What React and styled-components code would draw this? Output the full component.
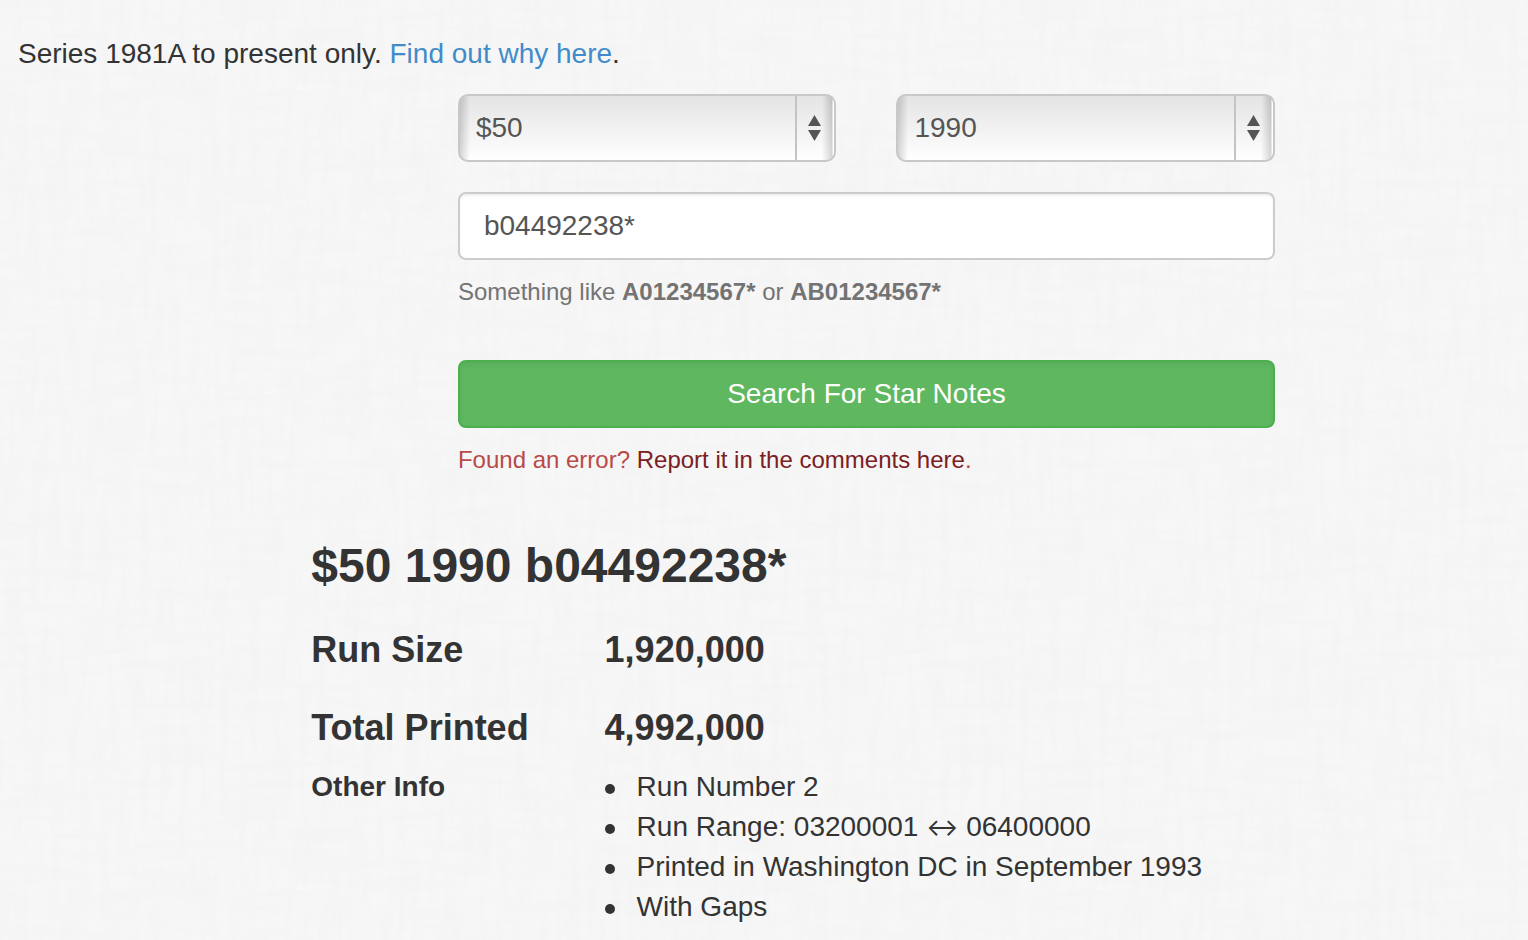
import React, { useState } from 'react';
import styled, { createGlobalStyle } from 'styled-components';

// linen texture: one layer of horizontal threads, one of vertical threads
const linen = encodeURIComponent(`<svg xmlns="http://www.w3.org/2000/svg" width="800" height="800">
<filter id="h" x="0" y="0" width="100%" height="100%"><feTurbulence type="fractalNoise" baseFrequency="0.014 0.1" numOctaves="4" seed="4" stitchTiles="stitch"/><feColorMatrix values="0 0 0 0 0.9  0 0 0 0 0.9  0 0 0 0 0.9  1.8 0 0 0 -0.7"/></filter>
<filter id="v" x="0" y="0" width="100%" height="100%"><feTurbulence type="fractalNoise" baseFrequency="0.1 0.014" numOctaves="4" seed="9" stitchTiles="stitch"/><feColorMatrix values="0 0 0 0 0.9  0 0 0 0 0.9  0 0 0 0 0.9  1.8 0 0 0 -0.7"/></filter>
<rect width="800" height="800" fill="#f7f7f7"/>
<rect width="800" height="800" filter="url(#h)"/>
<rect width="800" height="800" filter="url(#v)"/>
</svg>`);

const GlobalStyle = createGlobalStyle`
* {
  box-sizing: border-box;
}
body {
  margin: 0;
  background: #f5f5f5 url("data:image/svg+xml,${linen}");
  color: #333;
  font-family: "Helvetica Neue", "Liberation Sans", Arial, sans-serif;
  font-size: 28px;
  line-height: 40px;
}
`

const Page = styled.main`
padding: 34px 253px 14px 18px;
`

const Intro = styled.p`
margin: 0 0 20px;
`

const Link = styled.a`
color: #428bca;
text-decoration: none;
`

const FormRow = styled.form`
display: grid;
grid-template-columns: 7fr 13fr;
`

const Fields = styled.div`
grid-column: 2;
display: flex;
flex-direction: column;
`

const Selects = styled.div`
display: grid;
grid-template-columns: 1fr 1fr;
gap: 60px;
margin-bottom: 30px;
`

const SelectBox = styled.div`
position: relative;
display: flex;
`

const Select = styled.select`
appearance: none;
width: 100%;
height: 68px;
padding: 0 48px 0 16px;
border: 2px solid #c8c8c8;
border-radius: 10px;
background:
  linear-gradient(to right, rgba(0, 0, 0, 0.16), rgba(0, 0, 0, 0)) left / 10px 100% no-repeat,
  linear-gradient(to left, #fff 1px, rgba(0, 0, 0, 0.16) 2px, rgba(0, 0, 0, 0)) right / 12px 100% no-repeat,
  linear-gradient(#e4e4e4, #fff);
color: #555;
font: inherit;
`

const Arrows = styled.span`
position: absolute;
top: 2px;
bottom: 2px;
right: 2px;
width: 39px;
display: flex;
align-items: center;
padding-left: 11px;
border-left: 2px solid #c4c4c4;
pointer-events: none;
`

const Input = styled.input`
width: 100%;
height: 68px;
padding: 0 24px;
border: 2px solid #ccc;
border-radius: 8px;
background: #fff;
box-shadow: inset 0 2px 2px rgba(0, 0, 0, 0.06);
color: #555;
font: inherit;
`

const Note = styled.p`
margin: 12px 0 0;
font-size: 24px;
color: ${props => props.$error ? '#b94a48' : '#737373'};
`

const NoteLink = styled.a`
color: #7b2022;
text-decoration: none;
`

const Button = styled.button`
height: 68px;
margin-top: 48px;
border: 2px solid #4cae4c;
border-radius: 8px;
background: #5fb760;
box-shadow: inset 0 3px 5px rgba(0, 0, 0, 0.06);
color: #fff;
font: inherit;
`

const Results = styled.section`
display: grid;
grid-template-columns: 7fr 7fr 16fr;
margin-top: 60px;
`

const Title = styled.h1`
grid-column: 2 / 4;
margin: 0 0 38px;
font-size: 48px;
line-height: 52px;
font-weight: bold;
`

const Details = styled.dl`
grid-column: 2 / 4;
display: grid;
grid-template-columns: 7fr 16fr;
margin: 0;
`

const Term = styled.dt`
margin-bottom: ${props => props.$gap || 0}px;
font-size: ${props => props.$big ? 36 : 28}px;
font-weight: bold;
`

const Value = styled.dd`
margin: 0;
font-size: ${props => props.$big ? 36 : 28}px;
font-weight: ${props => props.$big ? 'bold' : 'normal'};
`

const List = styled.ul`
margin: 0;
padding: 0;
list-style: none;
`

const Item = styled.li`
display: flex;
align-items: center;

&::before {
  content: '';
  flex: none;
  width: 10px;
  height: 10px;
  margin: 4px 22px 0 0;
  border-radius: 50%;
  background: #333;
}
`

const Range = styled.span`
font-family: Inter, sans-serif;
font-size: 24px;
line-height: 1;
`

const Picker = ({ label, options, value, onChange }) => {
    return (
        <SelectBox>
            <Select aria-label={label} value={value} onChange={e => onChange(e.target.value)}>
                {options.map(option => <option key={option}>{option}</option>)}
            </Select>
            <Arrows>
                <svg width="13" height="26" viewBox="0 0 13 26" fill="#555">
                    <path d="M6.5 0L13 11H0z" />
                    <path d="M0 15h13L6.5 26z" />
                </svg>
            </Arrows>
        </SelectBox>
    )
}

const App = () => {
    const [bill, setBill] = useState('$50')
    const [series, setSeries] = useState('1990')
    const [serial, setSerial] = useState('b04492238*')

    return (
        <Page>
            <GlobalStyle />
            <Intro>
                Series 1981A to present only. <Link href="#why">Find out why here</Link>.
            </Intro>
            <FormRow onSubmit={e => e.preventDefault()}>
                <Fields>
                    <Selects>
                        <Picker label="Denomination" options={['$1', '$5', '$10', '$20', '$50', '$100']} value={bill} onChange={setBill} />
                        <Picker label="Series" options={['1981A', '1985', '1988', '1990', '1993']} value={series} onChange={setSeries} />
                    </Selects>
                    <Input aria-label="Serial number" value={serial} onChange={e => setSerial(e.target.value)} />
                    <Note>Something like <b>A01234567*</b> or <b>AB01234567*</b></Note>
                    <Button type="submit">Search For Star Notes</Button>
                    <Note $error>Found an error? <NoteLink href="#comments">Report it in the comments here</NoteLink>.</Note>
                </Fields>
            </FormRow>
            <Results>
                <Title>$50 1990 b04492238*</Title>
                <Details>
                    <Term $big $gap={38}>Run Size</Term>
                    <Value $big>1,920,000</Value>
                    <Term $big $gap={19}>Total Printed</Term>
                    <Value $big>4,992,000</Value>
                    <Term>Other Info</Term>
                    <Value>
                        <List>
                            <Item>Run Number 2</Item>
                            <Item><span>Run Range: 03200001 <Range>↔</Range> 06400000</span></Item>
                            <Item>Printed in Washington DC in September 1993</Item>
                            <Item>With Gaps</Item>
                        </List>
                    </Value>
                </Details>
            </Results>
        </Page>
    )
}

export default App
